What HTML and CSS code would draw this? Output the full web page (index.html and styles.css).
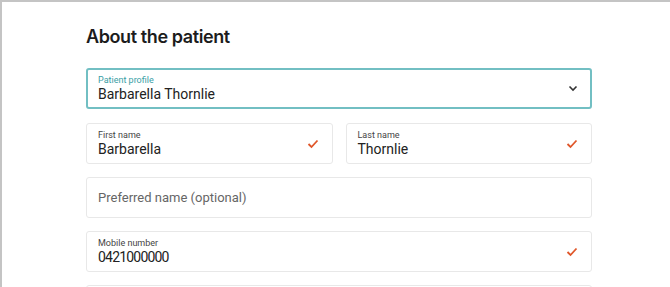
FILE: index.html
```html
<html>
<head>
	<meta charset="UTF-8">
	<title>About the patient</title>
	<link rel="stylesheet" href="styles.css">
</head>
<body>
	<div class="frame">
		<div class="form">
			<h2 class="title">About the patient</h2>
			<div class="field select">
				<div class="field-text">
					<span class="label">Patient profile</span>
					<span class="value">Barbarella Thornlie</span>
				</div>
				<svg class="chev" width="10" height="7" viewBox="0 0 10 7"><path d="M1.5 1.5 L5 5 L8.5 1.5" fill="none" stroke="#333" stroke-width="1.6"/></svg>
			</div>
			<div class="row">
				<div class="field">
					<div class="field-text">
						<span class="label">First name</span>
						<span class="value">Barbarella</span>
					</div>
					<svg class="tick" width="12" height="10" viewBox="0 0 12 10"><path d="M1.5 5 L4.5 8 L10.5 1.5" fill="none" stroke="#e0572a" stroke-width="1.8"/></svg>
				</div>
				<div class="field">
					<div class="field-text">
						<span class="label">Last name</span>
						<span class="value">Thornlie</span>
					</div>
					<svg class="tick" width="12" height="10" viewBox="0 0 12 10"><path d="M1.5 5 L4.5 8 L10.5 1.5" fill="none" stroke="#e0572a" stroke-width="1.8"/></svg>
				</div>
			</div>
			<div class="field">
				<span class="placeholder">Preferred name (optional)</span>
			</div>
			<div class="field">
				<div class="field-text">
					<span class="label">Mobile number</span>
					<span class="value digits">0421000000</span>
				</div>
				<svg class="tick" width="12" height="10" viewBox="0 0 12 10"><path d="M1.5 5 L4.5 8 L10.5 1.5" fill="none" stroke="#e0572a" stroke-width="1.8"/></svg>
			</div>
			<div class="field"></div>
		</div>
	</div>
</body>
</html>
```

FILE: styles.css
```css
* {
	margin: 0;
	padding: 0;
	box-sizing: border-box;
}
body {
	background: #fff;
	overflow: hidden;
}
.frame {
	height: 287px;
	overflow: hidden;
	border-top: 2px solid #c4c4c4;
	border-left: 2px solid #c4c4c4;
	padding: 24px 0 0 84px;
}
.form {
	width: 506px;
	display: flex;
	flex-direction: column;
	gap: 13px;
}
.title {
	font-family: Inter, "Liberation Sans", sans-serif;
	font-size: 18px;
	font-weight: 600;
	letter-spacing: -0.4px;
	color: #1c1c1c;
	line-height: 22px;
	margin-bottom: 7px;
}
.row {
	display: flex;
	gap: 13px;
}
.row .field {
	flex: 1;
}
.field {
	flex-shrink: 0;
	height: 41px;
	border: 1px solid #e8e8e8;
	border-radius: 3px;
	display: flex;
	align-items: center;
	padding: 0 13px 0 11px;
	font-family: Roboto, "Liberation Sans", sans-serif;
}
.field.select {
	border: 2px solid #72bfc3;
	padding-left: 10px;
	padding-right: 12px;
	margin-bottom: 1px;
}
.field-text {
	flex: 1;
	display: flex;
	flex-direction: column;
}
.label {
	font-size: 9px;
	line-height: 11px;
	color: #444;
}
.select .label {
	color: #3a9ea5;
}
.value {
	font-size: 14px;
	line-height: 17px;
	color: #222;
}
.digits {
	letter-spacing: -0.8px;
}
.placeholder {
	font-size: 13px;
	color: #666;
}
```
